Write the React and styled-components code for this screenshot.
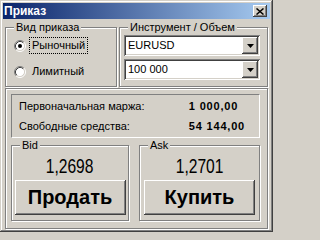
import React from 'react'
import styled, { createGlobalStyle, css } from 'styled-components'

const GlobalStyle = createGlobalStyle`
  html, body {
    margin: 0;
    padding: 0;
    background: #d4d0c8;
  }
  body {
    font-family: "Liberation Sans", Arial, sans-serif;
    font-size: 11px;
    color: #000;
  }
`

const raised = css`
  background: #d4d0c8;
  box-shadow: inset -1px -1px #404040, inset 1px 1px #fff,
    inset -2px -2px #808080, inset 2px 2px #d4d0c8;
`

const sunken = css`
  box-shadow: inset 1px 1px #808080, inset -1px -1px #fff,
    inset 2px 2px #404040, inset -2px -2px #d4d0c8;
`

const Window = styled.div`
  width: 273px;
  height: 232px;
  box-sizing: border-box;
  padding: 3px;
  display: flex;
  flex-direction: column;
  background: #d4d0c8;
  box-shadow: inset -1px -1px #404040, inset 1px 1px #d4d0c8,
    inset -2px -2px #808080, inset 2px 2px #fff;
`

const TitleBar = styled.div`
  height: 16px;
  flex: none;
  display: flex;
  align-items: center;
  justify-content: space-between;
  padding: 0 3px 0 1px;
  background: linear-gradient(to right, #0a246a, #a6caf0);
  color: #fff;
  font-weight: bold;
  font-size: 12px;
`

const CloseButton = styled.div`
  width: 14px;
  height: 12px;
  display: flex;
  align-items: center;
  justify-content: center;
  ${raised}
`

const Body = styled.div`
  flex: 1;
  display: flex;
  flex-direction: column;
  padding: 0 2px;
`

const TopRow = styled.div`
  display: flex;
  gap: 2px;
  padding-top: 8px;
`

const Group = styled.div`
  position: relative;
  box-sizing: border-box;
  border: 1px solid #808080;
  box-shadow: inset 1px 1px #fff, 1px 1px #fff;
  width: ${(p) => (p.$width ? `${p.$width}px` : 'auto')};
  height: ${(p) => (p.$height ? `${p.$height}px` : 'auto')};
  flex: ${(p) => (p.$width ? 'none' : '1')};
`

const Legend = styled.span`
  position: absolute;
  top: -8px;
  left: 8px;
  padding: 0 2px;
  line-height: 14px;
  background: #d4d0c8;
`

const RadioList = styled.div`
  display: flex;
  flex-direction: column;
  gap: 9px;
  padding: 9px 0 0 8px;
`

const RadioRow = styled.div`
  display: flex;
  align-items: center;
  gap: 3px;
  height: 17px;
`

const RadioLabel = styled.span`
  padding: 0 2px;
  line-height: 15px;
  border: 1px dotted ${(p) => (p.$focused ? '#000' : 'transparent')};
`

const ComboList = styled.div`
  display: flex;
  flex-direction: column;
  gap: 3px;
  padding: 7px 7px 0 4px;
`

const Combo = styled.div`
  height: 21px;
  box-sizing: border-box;
  display: flex;
  padding: 2px;
  background: #fff;
  ${sunken}
`

const ComboText = styled.span`
  flex: 1;
  padding-left: 2px;
  line-height: 17px;
`

const ComboButton = styled.div`
  width: 16px;
  display: flex;
  align-items: center;
  justify-content: center;
  ${raised}
`

const Frame = styled(Group)`
  margin-top: 1px;
  padding: 5px 7px 1px 5px;
  display: flex;
  flex-direction: column;
`

const Panel = styled.div`
  height: 44px;
  box-sizing: border-box;
  border: 1px solid;
  border-color: #808080 #fff #fff #808080;
  display: grid;
  grid-template-columns: 1fr auto;
  grid-auto-rows: 15px;
  row-gap: 5px;
  align-items: center;
  padding: 3px 14px 0 7px;
`

const Value = styled.span`
  font-weight: bold;
  letter-spacing: 0.8px;
`

const QuoteRow = styled.div`
  display: flex;
  gap: 10px;
  margin-top: 7px;
`

const QuoteBody = styled.div`
  display: flex;
  flex-direction: column;
  align-items: center;
  padding: 10px 0 5px;
`

const Price = styled.div`
  height: 20px;
  line-height: 20px;
  font-size: 20px;
  transform: scaleX(0.78);
`

const TradeButton = styled.div`
  margin-top: 4px;
  width: 111px;
  height: 35px;
  display: flex;
  align-items: center;
  justify-content: center;
  font-size: 20px;
  font-weight: bold;
  ${raised}
`

const Radio = ({ checked }) => (
  <svg width="12" height="12" viewBox="0 0 12 12">
    <circle cx="6" cy="6" r="4.5" fill="#fff" />
    <path d="M2.11 9.89A5.5 5.5 0 0 1 9.89 2.11" fill="none" stroke="#808080" />
    <path d="M9.89 2.11A5.5 5.5 0 0 1 2.11 9.89" fill="none" stroke="#fff" />
    <path d="M2.82 9.18A4.5 4.5 0 0 1 9.18 2.82" fill="none" stroke="#404040" />
    <path d="M9.18 2.82A4.5 4.5 0 0 1 2.82 9.18" fill="none" stroke="#d4d0c8" />
    {checked && <circle cx="6" cy="6" r="2" fill="#000" />}
  </svg>
)

const Arrow = () => (
  <svg width="7" height="4" viewBox="0 0 7 4">
    <path d="M0 0h7L3.5 4z" fill="#000" />
  </svg>
)

const Quote = ({ label, price, action, width }) => (
  <Group $width={width} $height={76}>
    <Legend>{label}</Legend>
    <QuoteBody>
      <Price>{price}</Price>
      <TradeButton>{action}</TradeButton>
    </QuoteBody>
  </Group>
)

export default function App() {
  return (
    <>
      <GlobalStyle />
      <Window>
        <TitleBar>
          <span>Приказ</span>
          <CloseButton>
            <svg width="8" height="7" viewBox="0 0 8 7">
              <path d="M0.5 0.5l7 6M7.5 0.5l-7 6" stroke="#000" strokeWidth="1.5" />
            </svg>
          </CloseButton>
        </TitleBar>
        <Body>
          <TopRow>
            <Group $width={112} $height={60}>
              <Legend>Вид приказа</Legend>
              <RadioList>
                <RadioRow>
                  <Radio checked />
                  <RadioLabel $focused>Рыночный</RadioLabel>
                </RadioRow>
                <RadioRow>
                  <Radio />
                  <RadioLabel>Лимитный</RadioLabel>
                </RadioRow>
              </RadioList>
            </Group>
            <Group $height={60}>
              <Legend>Инструмент / Объем</Legend>
              <ComboList>
                <Combo>
                  <ComboText>EURUSD</ComboText>
                  <ComboButton>
                    <Arrow />
                  </ComboButton>
                </Combo>
                <Combo>
                  <ComboText>100 000</ComboText>
                  <ComboButton>
                    <Arrow />
                  </ComboButton>
                </Combo>
              </ComboList>
            </Group>
          </TopRow>
          <Frame $height={135}>
            <Panel>
              <span>Первоначальная маржа:</span>
              <Value>1 000,00</Value>
              <span>Свободные средства:</span>
              <Value>54 144,00</Value>
            </Panel>
            <QuoteRow>
              <Quote label="Bid" price="1,2698" action="Продать" width={118} />
              <Quote label="Ask" price="1,2701" action="Купить" />
            </QuoteRow>
          </Frame>
        </Body>
      </Window>
    </>
  )
}
